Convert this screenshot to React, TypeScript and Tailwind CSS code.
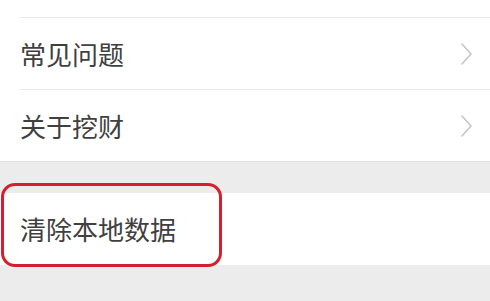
import React from "react";

function Chevron() {
  return (
    <svg width="13" height="24" viewBox="0 0 13 24" fill="none" className="shrink-0">
      <path d="M2 2l9 10-9 10" stroke="#c4c4c4" strokeWidth="1.5" strokeLinecap="round" strokeLinejoin="round" />
    </svg>
  );
}

function Row({ title, h, arrow = true }: { title: string; h: string; arrow?: boolean }) {
  return (
    <div className={`flex items-center justify-between bg-white pl-[20px] pr-[17px] ${h}`}>
      <span className="text-[26px] leading-none text-[#404040]">{title}</span>
      {arrow ? <Chevron /> : null}
    </div>
  );
}

export default function App() {
  return (
    <div
      className="relative h-[301px] w-[490px] overflow-hidden bg-[#ececec]"
      style={{ fontFamily: '"Noto Sans CJK SC", "Noto Sans", sans-serif' }}
    >
      <div className="bg-white">
        <div className="h-[17px]" />
        <div className="ml-[19px] h-px bg-[#ebebeb]" />
        <Row title="常见问题" h="h-[71px]" />
        <div className="ml-[19px] h-px bg-[#ebebeb]" />
        <Row title="关于挖财" h="h-[71px]" />
      </div>
      <div className="h-[32px] border-t border-[#e0e0e0]" />
      <Row title="清除本地数据" h="h-[72px]" arrow={false} />
      {/* red highlight */}
      <div className="absolute left-[1px] top-[183px] h-[84px] w-[221px] rounded-[14px] border-[3px] border-[#d61f2c]" />
    </div>
  );
}
